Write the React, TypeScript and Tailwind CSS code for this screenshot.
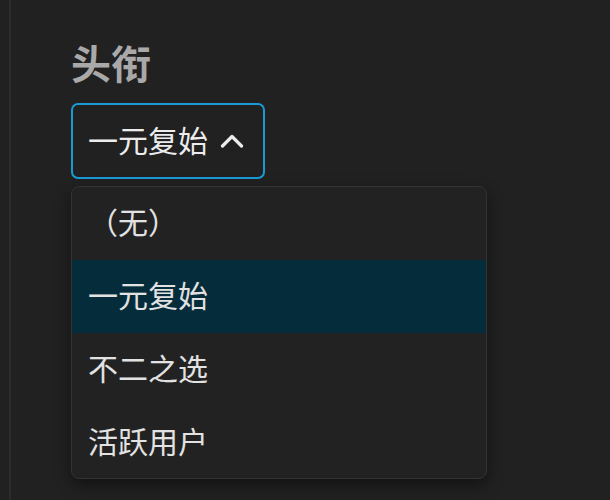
import React from "react";

export default function App() {
  const items = ["（无）", "一元复始", "不二之选", "活跃用户"];
  return (
    <div
      className="h-[500px] w-[610px] bg-[#212121] overflow-hidden pl-[9px]"
      style={{ fontFamily: '"Noto Sans", "Noto Sans CJK SC", sans-serif' }}
    >
      <div className="h-full border-l-2 border-[#2c2c2c] pl-[60px] pt-[42px]">
        <div className="text-[40px] leading-[44px] font-bold text-[#a9a9a9]">头衔</div>
        <div className="mt-[17px] flex h-[76px] w-[194px] items-center rounded-[7px] border-2 border-[#1a9ad6] pl-[15px] text-[#ececec]">
          <span className="text-[30px] leading-none">一元复始</span>
          <svg className="ml-[12px]" width="24" height="14" viewBox="0 0 24 14" fill="none">
            <path d="M2.5 12 L12 2.5 L21.5 12" stroke="#ececec" strokeWidth="3.2" strokeLinecap="round" strokeLinejoin="round" />
          </svg>
        </div>
        <div className="mt-[7px] w-[416px] overflow-hidden rounded-[8px] border border-[#333333] bg-[#222222] shadow-[0_6px_16px_rgba(0,0,0,0.45)]">
          {items.map((t, i) => (
            <div
              key={t}
              className={`flex h-[72.75px] items-center pl-[16px] text-[30px] leading-none text-[#e2e2e2] ${
                i === 1 ? "bg-[#052c3b]" : ""
              }`}
            >
              {t}
            </div>
          ))}
        </div>
      </div>
    </div>
  );
}
